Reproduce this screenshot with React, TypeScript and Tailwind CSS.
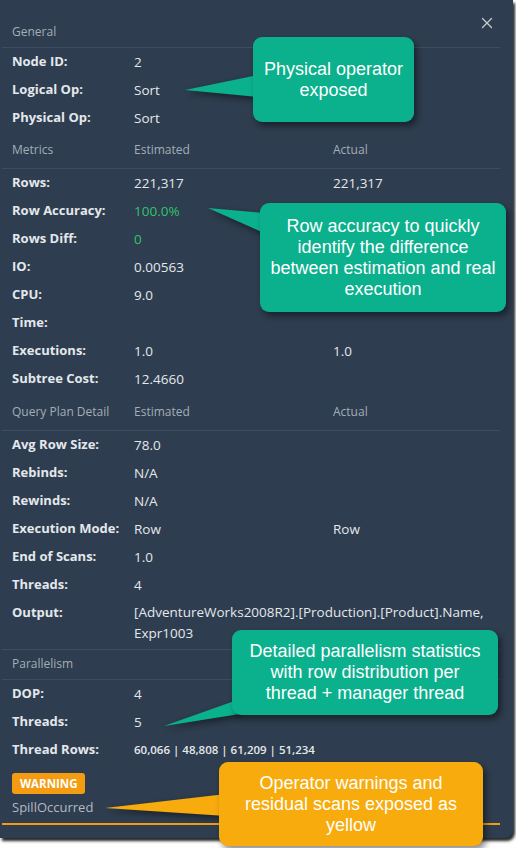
import { X } from 'lucide-react';

type Row = {
  label: string;
  value?: string;
  actual?: string;
  tone?: 'green';
};

const generalRows: Row[] = [
  { label: 'Node ID:', value: '2' },
  { label: 'Logical Op:', value: 'Sort' },
  { label: 'Physical Op:', value: 'Sort' },
];

const metricRows: Row[] = [
  { label: 'Rows:', value: '221,317', actual: '221,317' },
  { label: 'Row Accuracy:', value: '100.0%', tone: 'green' },
  { label: 'Rows Diff:', value: '0', tone: 'green' },
  { label: 'IO:', value: '0.00563' },
  { label: 'CPU:', value: '9.0' },
  { label: 'Time:' },
  { label: 'Executions:', value: '1.0', actual: '1.0' },
  { label: 'Subtree Cost:', value: '12.4660' },
];

const planRows: Row[] = [
  { label: 'Avg Row Size:', value: '78.0' },
  { label: 'Rebinds:', value: 'N/A' },
  { label: 'Rewinds:', value: 'N/A' },
  { label: 'Execution Mode:', value: 'Row', actual: 'Row' },
  { label: 'End of Scans:', value: '1.0' },
  { label: 'Threads:', value: '4' },
];

const parallelRows: Row[] = [
  { label: 'DOP:', value: '4' },
  { label: 'Threads:', value: '5' },
];

const SectionHeader = ({
  title,
  estimated,
  actual,
  className,
}: {
  title: string;
  estimated?: string;
  actual?: string;
  className: string;
}) => (
  <div
    className={`flex items-end pl-[10px] border-b border-[#3e4e60] text-[12px] text-[#a4adb8] ${className}`}
  >
    <div className="w-[122px]">{title}</div>
    <div className="w-[199px]">{estimated}</div>
    <div>{actual}</div>
  </div>
);

const PropRow = ({ row }: { row: Row }) => (
  <div className="flex items-center h-[28px] pl-[10px] text-[13.5px]">
    <div className="w-[122px] text-[13px] font-bold text-[#e4e8ec]">{row.label}</div>
    <div
      className={`w-[199px] ${row.tone === 'green' ? 'text-[#2fc46c]' : 'text-[#e4e8ec]'}`}
    >
      {row.value}
    </div>
    <div className="text-[#e4e8ec]">{row.actual}</div>
  </div>
);

const Callout = ({
  box,
  tail,
  color,
  lines,
}: {
  box: string;
  tail: string;
  color: string;
  lines: string[];
}) => (
  <>
    <svg
      className="absolute left-0 top-0 pointer-events-none"
      width={516}
      height={848}
      style={{ filter: 'drop-shadow(2px 3px 3px rgba(0,0,0,0.45))' }}
    >
      <polygon points={tail} fill={color} />
    </svg>
    <div
      className={`absolute flex flex-col items-center justify-center rounded-[9px] shadow-[3px_4px_6px_rgba(0,0,0,0.45)] text-white text-[18px] leading-[21px] text-center font-['Liberation_Sans',Arial,sans-serif] ${box}`}
    >
      {lines.map((line) => (
        <div key={line}>{line}</div>
      ))}
    </div>
  </>
);

export default function App() {
  return (
    <div className="relative w-[516px] h-[848px] bg-white overflow-hidden font-['Open_Sans','Noto_Sans',sans-serif]">
      <div className="relative w-[513px] h-[838px] bg-[#2e3d4f] rounded-br-[8px] shadow-[2px_3px_3px_rgba(0,0,0,0.85)]">
        <button className="absolute right-[17px] top-[14px] text-[#c3c9cf]">
          <X size={18} strokeWidth={1.8} />
        </button>

        <div className="ml-[2px] w-[498px]">
          <SectionHeader title="General" className="h-[48px] pb-[6px]" />
          {generalRows.map((row) => (
            <PropRow key={row.label} row={row} />
          ))}

          <SectionHeader
            title="Metrics"
            estimated="Estimated"
            actual="Actual"
            className="h-[37px] pb-[9px]"
          />
          {metricRows.map((row) => (
            <PropRow key={row.label} row={row} />
          ))}

          <SectionHeader
            title="Query Plan Detail"
            estimated="Estimated"
            actual="Actual"
            className="h-[38px] pb-[9px]"
          />
          {planRows.map((row) => (
            <PropRow key={row.label} row={row} />
          ))}
          <div className="flex pl-[10px] pt-[3px] pb-[5px] text-[13.5px] leading-[21px]">
            <div className="w-[122px] shrink-0 text-[13px] font-bold text-[#e4e8ec]">Output:</div>
            <div className="text-[#e4e8ec]">
              [AdventureWorks2008R2].[Production].[Product].Name,
              <br />
              Expr1003
            </div>
          </div>

          <SectionHeader
            title="Parallelism"
            className="h-[31px] pb-[6px] border-t"
          />
          {parallelRows.map((row) => (
            <PropRow key={row.label} row={row} />
          ))}
          <div className="flex items-center h-[28px] pl-[10px]">
            <div className="w-[122px] text-[13px] font-bold text-[#e4e8ec]">Thread Rows:</div>
            <div className="text-[11.5px] font-semibold text-[#e4e8ec]">
              60,066 | 48,808 | 61,209 | 51,234
            </div>
          </div>

          {/* warnings */}
          <div className="flex flex-col items-start pl-[10px] pt-[9px]">
            <span className="flex items-center h-[21px] px-[8px] rounded-[3px] bg-[#f39c12] text-white text-[11.5px] font-bold">
              WARNING
            </span>
            <div className="mt-[3px] text-[13px] leading-[20px] text-[#b2bac3]">SpillOccurred</div>
          </div>
          <div className="mt-[6px] h-[2px] bg-[#f39c12]" />
        </div>
      </div>

      <Callout
        box="left-[253px] top-[37px] w-[161px] h-[85px] bg-[#0bb08d]"
        tail="185,90 258,75 258,97"
        color="#0bb08d"
        lines={['Physical operator', 'exposed']}
      />
      <Callout
        box="left-[260px] top-[203px] w-[246px] h-[109px] bg-[#0bb08d]"
        tail="208,208 264,213 264,233"
        color="#0bb08d"
        lines={[
          'Row accuracy to quickly',
          'identify the difference',
          'between estimation and real',
          'execution',
        ]}
      />
      <Callout
        box="left-[232px] top-[630px] w-[266px] h-[85px] bg-[#0bb08d]"
        tail="164,726 240,699 240,714"
        color="#0bb08d"
        lines={[
          'Detailed parallelism statistics',
          'with row distribution per',
          'thread + manager thread',
        ]}
      />
      <Callout
        box="left-[219px] top-[762px] w-[264px] h-[84px] bg-[#f7ab0c]"
        tail="105,808 226,794 226,816"
        color="#f7ab0c"
        lines={['Operator warnings and', 'residual scans exposed as', 'yellow']}
      />
    </div>
  );
}
